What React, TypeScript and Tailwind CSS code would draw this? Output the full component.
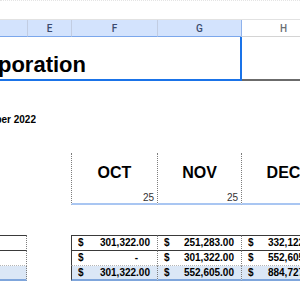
const months = [
  { name: "OCT", day: "25", width: "w-[86px]" },
  { name: "NOV", day: "25", width: "w-[84px]" },
  { name: "DEC", day: "25", width: "w-[84px]" },
];

const amounts = [
  ["301,322.00", "251,283.00", "332,122.00"],
  ["-", "301,322.00", "552,605.00"],
  ["301,322.00", "552,605.00", "884,727.00"],
];

const rowStyles = [
  "h-[16px] border-t border-b border-t-[#3a3a3a] border-b-[#3a3a3a]",
  "h-[15px] border-b border-b-[#b5b5b5] [border-bottom-style:dotted]",
  "h-[15px] bg-[#dbe7f6] border-b-2 border-b-[#7fa6dc]",
];

function ColumnHeader({ label, width, selected }: { label: string; width: string; selected: boolean }) {
  return (
    <div
      className={`${width} shrink-0 h-[17px] flex items-center justify-center border-l text-[10px] font-medium ${
        selected
          ? "bg-[#d3e3fd] border-l-[#c2cde2] border-b border-b-[#7ba7ec] text-[#3a4b6e]"
          : "bg-white border-l-[#8fb2ec] border-b border-b-[#d4d4d4] text-[#6b6f75]"
      }`}
    >
      {label}
    </div>
  );
}

function MoneyCell({ value, width, edge, row }: { value: string; width: string; edge: string; row: number }) {
  return (
    <div className={`${width} shrink-0 flex items-center justify-between pl-[6px] pr-[7px] text-[10px] leading-[12px] font-bold ${edge} ${rowStyles[row]}`}>
      <span>$</span>
      <span className={value === "-" ? "pr-[12px]" : ""}>{value}</span>
    </div>
  );
}

export default function App() {
  return (
    <div className="w-[300px] h-[300px] overflow-hidden bg-white text-black font-['Liberation_Sans',Arial,sans-serif]">
      {/* strip above the column letters */}
      <div className="h-[20px] border-b border-b-[#e2e2e2] [border-top-width:1px] [border-top-style:dotted] [border-top-color:#e4e4e4]" />

      {/* column letters */}
      <div className="flex font-['Roboto',Arial,sans-serif]">
        <div className="w-[27px] shrink-0 h-[17px] bg-[#d3e3fd] border-b border-b-[#7ba7ec]" />
        <ColumnHeader label="E" width="w-[44px]" selected />
        <ColumnHeader label="F" width="w-[86px]" selected />
        <ColumnHeader label="G" width="w-[84px]" selected />
        <ColumnHeader label="H" width="w-[84px]" selected={false} />
      </div>

      {/* merged title cell */}
      <div className="flex h-[44px]">
        <div className="w-[242px] shrink-0 border-r-2 border-b-2 border-[#1a73e8]">
          <div className="w-[86px] overflow-hidden flex justify-end pt-[15px]">
            <span className="whitespace-nowrap text-[22px] leading-[26px] font-bold">Corporation</span>
          </div>
        </div>
        <div className="w-[84px] shrink-0 border-b-2 border-b-[#6b6b6b]" />
      </div>

      {/* period */}
      <div className="h-[72px]">
        <div className="w-[36px] overflow-hidden flex justify-end pt-[33px]">
          <span className="whitespace-nowrap text-[10px] leading-[12px] font-bold">December 2022</span>
        </div>
      </div>

      {/* month headings */}
      <div className="flex h-[52px]">
        <div className="w-[71px] shrink-0" />
        {months.map((m) => (
          <div
            key={m.name}
            className={`${m.width} shrink-0 flex flex-col [border-left-width:1px] [border-left-style:dotted] [border-left-color:#7d7d7d] border-b-2 border-b-[#a9c6f2]`}
          >
            <div className="pt-[11px] text-center text-[16px] leading-[18px] font-bold">{m.name}</div>
            <div className="mt-auto pr-[3px] text-right text-[10px] leading-[10px] text-[#333]">{m.day}</div>
          </div>
        ))}
      </div>

      <div className="h-[30px]" />

      {/* totals */}
      <div className="flex flex-col">
        {amounts.map((row, i) => (
          <div key={i} className="flex">
            <div className={`w-[27px] shrink-0 [border-right-width:1px] [border-right-style:dotted] [border-right-color:#7d7d7d] ${rowStyles[i]}`} />
            <div className="w-[44px] shrink-0" />
            <MoneyCell value={row[0]} width="w-[86px]" edge="border-l border-l-[#3a3a3a]" row={i} />
            <MoneyCell
              value={row[1]}
              width="w-[84px]"
              edge="[border-left-width:1px] [border-left-style:dotted] [border-left-color:#7d7d7d]"
              row={i}
            />
            <MoneyCell
              value={row[2]}
              width="w-[84px]"
              edge="[border-left-width:1px] [border-left-style:dotted] [border-left-color:#7d7d7d]"
              row={i}
            />
          </div>
        ))}
      </div>
    </div>
  );
}
